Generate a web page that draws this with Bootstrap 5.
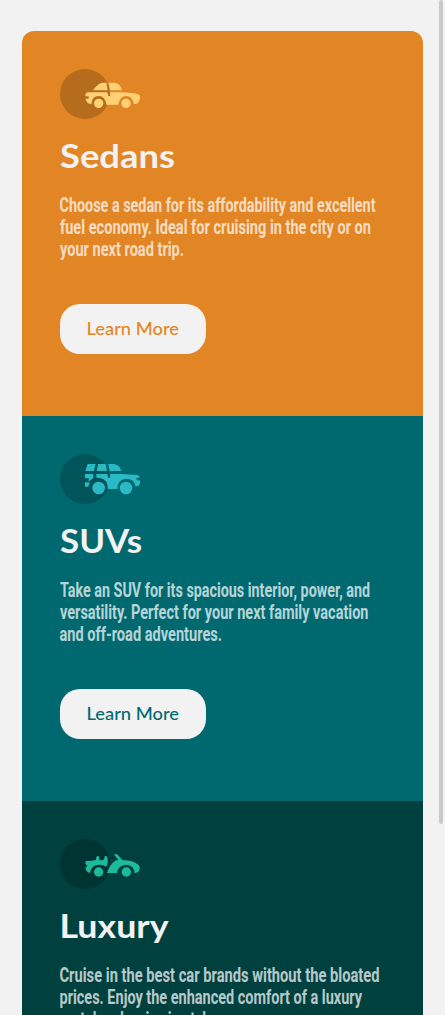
<!DOCTYPE html>
<html lang="en">
<head>
<meta charset="utf-8">
<meta name="viewport" content="width=device-width, initial-scale=1">
<title>Car columns</title>
<link href="https://cdn.jsdelivr.net/npm/bootstrap@5.3.0/dist/css/bootstrap.min.css" rel="stylesheet">
<style>
body{background:#f2f2f2;height:100vh;overflow:hidden}
.page{padding:31px 22px 0}
.car-cards{border-radius:12px;overflow:hidden}
.car-card{height:385px;padding:38px 38px 0}
.sedan{background:#e28625;--tone:#e28625;--car:#ffd174;--disc:#b56c1d}
.suv{background:#006970;--tone:#006970;--car:#2bb9c5;--disc:#00545a}
.luxury{background:#004140;--tone:#004140;--car:#1cbb9b;--disc:#003433}
svg{display:block;overflow:visible}
.title{margin:18px 0 0;height:40px}
.title text{font:700 32px Lato,sans-serif;fill:#f2f2f2}
.blurb{margin:18px 0 0;height:66px}
.blurb text{font:700 20.7px Roboto,sans-serif;fill:#fff;fill-opacity:.72}
.learn{width:146px;height:50px;margin-top:43px;padding:0;border:0;border-radius:20px;background:#f2f2f2}
.learn:hover{background:#f2f2f2}
.learn text{font:500 16.8px Lato,sans-serif;fill:var(--tone)}
.thumb{width:4px;height:824px;top:0;right:2px;border-radius:2px;background:#c9c9c9}
</style>
</head>
<body>
<main class="page">
<div class="car-cards d-flex flex-column">
<section class="car-card sedan flex-shrink-0">
  <svg width="80" height="50" viewBox="0 0 240 150"><circle cx="75" cy="75" r="75" fill="var(--disc)"/>
   <g fill="var(--car)"><path d="M99 64Q112 44 127 41H139L143 64Z"/><path d="M146 41H164Q181 43 186 64H150Z"/>
   <path d="M82 70H142L145 81H151L150 70H187Q216 71 234 76Q240 77 240 83V89L237 97L230 105H221Q218 81 198 81Q179 81 175 107H139Q136 81 116 81Q96 81 94 106L83 102L77 92V89H86V82H76V76Z"/><circle cx="116" cy="103" r="14"/><circle cx="198" cy="103" r="14"/></g></svg>
  <h2 class="title"><svg width="160" height="40"><text x="0" y="31" textLength="115" lengthAdjust="spacingAndGlyphs">Sedans</text></svg></h2>
  <p class="blurb"><svg width="325" height="66"><text x="-.5" y="17" textLength="316" lengthAdjust="spacingAndGlyphs">Choose a sedan for its affordability and excellent</text><text y="39" textLength="311" lengthAdjust="spacingAndGlyphs">fuel economy. Ideal for cruising in the city or on</text><text y="61" textLength="124" lengthAdjust="spacingAndGlyphs">your next road trip.</text></svg></p>
  <button class="btn learn d-block"><svg width="146" height="50"><text x="26.5" y="31" textLength="92.5" lengthAdjust="spacingAndGlyphs">Learn More</text></svg></button>
</section>
<section class="car-card suv flex-shrink-0">
  <svg width="80" height="50" viewBox="0 0 240 150"><circle cx="75" cy="75" r="75" fill="var(--disc)"/>
   <g fill="var(--car)"><path d="M83 30H107L102 51H76Z"/><path d="M114 30H137L141 51H110Z"/><path d="M145 30H162Q179 32 184 51H149Z"/>
   <path d="M75 60H100V72L89 80L86 85V73H75Z"/><path d="M109 60H142L145 71H151L150 60H184L232 63Q239 64 239 71H230V79H240V90L234 97H226Q224 74 198 74Q173 76 172 105H143Q144 77 120 72L109 71Z"/><path d="M75 85H85L89 87L85 98H75Z"/><circle cx="116" cy="102" r="19"/><circle cx="198" cy="102" r="19"/></g></svg>
  <h2 class="title"><svg width="160" height="40"><text x="0" y="31" textLength="82" lengthAdjust="spacingAndGlyphs">SUVs</text></svg></h2>
  <p class="blurb"><svg width="325" height="66"><text y="17" textLength="310" lengthAdjust="spacingAndGlyphs">Take an SUV for its spacious interior, power, and</text><text y="39" textLength="308.5" lengthAdjust="spacingAndGlyphs">versatility. Perfect for your next family vacation</text><text x="-.5" y="61" textLength="162.5" lengthAdjust="spacingAndGlyphs">and off-road adventures.</text></svg></p>
  <button class="btn learn d-block"><svg width="146" height="50"><text x="26.5" y="31" textLength="92.5" lengthAdjust="spacingAndGlyphs">Learn More</text></svg></button>
</section>
<section class="car-card luxury flex-shrink-0">
  <svg width="80" height="50" viewBox="0 0 240 150"><circle cx="75" cy="75" r="75" fill="var(--disc)"/>
   <g fill="var(--car)"><path d="M77 66Q91 67 108 63L109 54Q113 48 118 54V64H127Q135 61 133 53Q137 48 142 54Q145 66 142 77L138 83Q129 76 116 77Q94 78 90 103L80 97L76 87L82 81L76 74Z"/><path d="M163 49Q165 42 173 47L187 63Q219 64 235 77Q240 81 239 88L237 97Q232 102 224 103Q223 79 199 77Q174 78 171 102H141Q149 76 166 65L175 62Z"/><circle cx="116" cy="99" r="14"/><circle cx="199" cy="99" r="14"/></g></svg>
  <h2 class="title"><svg width="160" height="40"><text x="-.5" y="31" textLength="109" lengthAdjust="spacingAndGlyphs">Luxury</text></svg></h2>
  <p class="blurb"><svg width="325" height="66"><text x="-.5" y="17" textLength="320" lengthAdjust="spacingAndGlyphs">Cruise in the best car brands without the bloated</text><text x="-.5" y="39" textLength="302.5" lengthAdjust="spacingAndGlyphs">prices. Enjoy the enhanced comfort of a luxury</text><text x="-.5" y="61" textLength="158.5" lengthAdjust="spacingAndGlyphs">rental and arrive in style.</text></svg></p>
  <button class="btn learn d-block"><svg width="146" height="50"><text x="26.5" y="31" textLength="92.5" lengthAdjust="spacingAndGlyphs">Learn More</text></svg></button>
</section>
</div>
</main>
<div class="thumb position-fixed"></div>
<script src="https://cdn.jsdelivr.net/npm/bootstrap@5.3.0/dist/js/bootstrap.bundle.min.js"></script>
</body>
</html>
